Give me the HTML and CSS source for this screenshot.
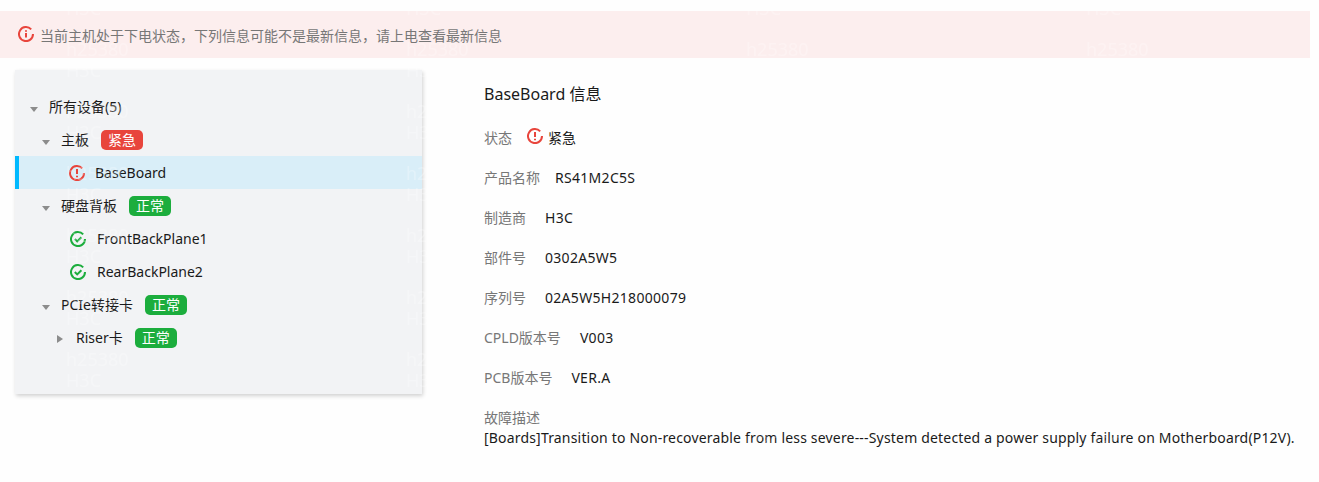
FILE: index.html
```html
<!DOCTYPE html>
<html lang="zh-CN">
<head>
    <meta charset="UTF-8">
    <title>BaseBoard 信息</title>
    <link rel="stylesheet" href="styles.css">
</head>
<body>
    <div class="notice">
        <svg class="icon" viewBox="0 0 16 16"><path class="ring-red" d="M13.200 3.400A7 7 0 1 0 15 8"/><path class="mark-red" d="M8 7v4.500M8 4.200v1.500"/></svg>
        <span>当前主机处于下电状态，下列信息可能不是最新信息，请上电查看最新信息</span>
    </div>

    <div class="main">
        <div class="tree-panel">
            <div class="tree-row level-0"><i class="caret"></i><span>所有设备(5)</span></div>
            <div class="tree-row level-1"><i class="caret"></i><span>主板</span><b class="badge badge-red">紧急</b></div>
            <div class="tree-row leaf-board active">
                <svg class="icon" viewBox="0 0 16 16"><path class="ring-red" d="M13.200 3.400A7 7 0 1 0 15 8"/><path class="mark-red" d="M8 4v5M8 10.800v1.500"/></svg>
                <span>BaseBoard</span>
            </div>
            <div class="tree-row level-1"><i class="caret"></i><span>硬盘背板</span><b class="badge badge-green">正常</b></div>
            <div class="tree-row leaf-plane">
                <svg class="icon" viewBox="0 0 16 16"><path class="ring-green" d="M13.200 3.400A7 7 0 1 0 15 8"/><path class="ring-green" d="M4.800 8l2.400 2.400 4.200-4.200"/></svg>
                <span>FrontBackPlane1</span>
            </div>
            <div class="tree-row leaf-plane">
                <svg class="icon" viewBox="0 0 16 16"><path class="ring-green" d="M13.200 3.400A7 7 0 1 0 15 8"/><path class="ring-green" d="M4.800 8l2.400 2.400 4.200-4.200"/></svg>
                <span>RearBackPlane2</span>
            </div>
            <div class="tree-row level-1"><i class="caret"></i><span>PCIe转接卡</span><b class="badge badge-green">正常</b></div>
            <div class="tree-row level-2"><i class="caret caret-closed"></i><span>Riser卡</span><b class="badge badge-green">正常</b></div>
        </div>

        <div class="details">
            <h2 class="details-title">BaseBoard 信息</h2>
            <div class="info-row">
                <span class="info-label label-tight">状态</span>
                <svg class="icon status-icon" viewBox="0 0 16 16"><path class="ring-red" d="M13.200 3.400A7 7 0 1 0 15 8"/><path class="mark-red" d="M8 4v5M8 10.800v1.500"/></svg>
                <span class="status-text">紧急</span>
            </div>
            <div class="info-row"><span class="info-label label-tight">产品名称</span><span class="info-value">RS41M2C5S</span></div>
            <div class="info-row"><span class="info-label">制造商</span><span class="info-value">H3C</span></div>
            <div class="info-row"><span class="info-label">部件号</span><span class="info-value">0302A5W5</span></div>
            <div class="info-row"><span class="info-label">序列号</span><span class="info-value">02A5W5H218000079</span></div>
            <div class="info-row"><span class="info-label">CPLD版本号</span><span class="info-value">V003</span></div>
            <div class="info-row"><span class="info-label">PCB版本号</span><span class="info-value">VER.A</span></div>
            <div class="fault">
                <div class="info-label">故障描述</div>
                <div class="fault-text">[Boards]Transition to Non-recoverable from less severe---System detected a power supply failure on Motherboard(P12V).</div>
            </div>
        </div>
    </div>

    <!-- watermark over the whole page -->
    <svg class="watermark">
        <defs>
            <pattern id="wm" x="66" y="0" width="340" height="62" patternUnits="userSpaceOnUse">
                <text class="wm-text" x="0" y="56">h25380</text>
                <text class="wm-text" x="0" y="15">H3C</text>
            </pattern>
        </defs>
        <rect width="100%" height="100%" fill="url(#wm)"/>
    </svg>
</body>
</html>
```

FILE: styles.css
```css
html, body {
    margin: 0;
    height: 482px;
    overflow: hidden;
}
body {
    position: relative;
    padding-top: 11px;
    box-sizing: border-box;
    font-family: "Noto Sans", "Noto Sans CJK SC", sans-serif;
    font-size: 14px;
    color: #1a1a1a;
    background-color: #fefefe;
}
.icon {
    width: 16px;
    height: 16px;
    flex: none;
}
.ring-red, .mark-red, .ring-green {
    fill: none;
    stroke-width: 2;
}
.ring-red, .mark-red {
    stroke: #e8453c;
}
.ring-green {
    stroke: #1cad3d;
}
.notice {
    display: flex;
    align-items: center;
    height: 47px;
    margin-right: 9px;
    padding-left: 18px;
    background-color: #fceeee;
    color: #777;
}
.notice .icon {
    margin-bottom: 2px;
}
.notice span {
    margin-left: 6px;
}
.main {
    display: flex;
    margin-top: 12px;
    padding-left: 15px;
}
.tree-panel {
    width: 407px;
    height: 324px;
    box-sizing: border-box;
    padding-top: 20px;
    background-color: #f2f3f5;
    box-shadow: 1px 2px 4px rgba(0,0,0,0.18);
}
.tree-row {
    display: flex;
    align-items: center;
    height: 33px;
    box-sizing: border-box;
}
.level-0 { padding-left: 15px; }
.level-1 { padding-left: 27px; }
.level-2 { padding-left: 42px; }
.level-0 span, .level-1 span, .level-2 span {
    margin-bottom: 2px;
}
.leaf-board { padding-left: 54px; }
.leaf-plane { padding-left: 55px; }
.leaf-board .icon { margin-right: 10px; }
.leaf-plane .icon { margin-right: 11px; }
.tree-row.active {
    background-color: #d9eef8;
    border-left: 4px solid #00b9ff;
    padding-left: 50px;
}
.caret {
    width: 0;
    height: 0;
    margin: 5px 11px 0 0;
    border-style: solid;
    border-width: 5px 4px 0 4px;
    border-color: #8c8c8c transparent transparent transparent;
}
.caret-closed {
    margin: 3px 13px 0 0;
    border-width: 4px 0 4px 6px;
    border-color: transparent transparent transparent #8c8c8c;
}
.badge {
    width: 42px;
    height: 20px;
    margin-left: 12px;
    border-radius: 5px;
    color: #fff;
    font-weight: 400;
    line-height: 20px;
    text-align: center;
}
.badge-red { background-color: #e8453c; }
.badge-green { background-color: #1cad3d; }
.details {
    margin-left: 62px;
    padding-top: 12px;
}
.details-title {
    margin: 0 0 11px;
    font-size: 16px;
    font-weight: 400;
    line-height: 24px;
}
.info-row {
    display: flex;
    align-items: center;
    height: 40px;
}
.info-label {
    color: #777;
    margin-right: 19px;
}
.label-tight {
    margin-right: 15px;
}
.info-value {
    letter-spacing: 0.3px;
}
.status-icon {
    margin-bottom: 3px;
}
.status-text {
    margin-left: 5px;
}
.fault {
    margin-top: 11px;
    line-height: 20px;
    white-space: nowrap;
}
.fault-text {
    letter-spacing: 0.18px;
}
.watermark {
    position: absolute;
    top: 0;
    left: 0;
    width: 100%;
    height: 100%;
    pointer-events: none;
}
.wm-text {
    font-size: 18px;
    fill: rgba(255,255,255,0.25);
}
```
